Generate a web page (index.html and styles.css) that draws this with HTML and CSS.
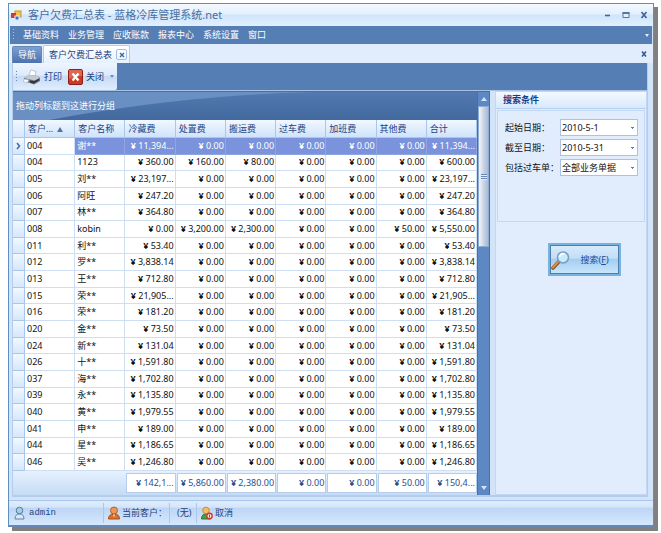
FILE: index.html
```html
<!DOCTYPE html>
<html lang="zh-CN">
<head>
    <meta charset="UTF-8">
    <meta name="viewport" content="width=device-width, initial-scale=1.0">
    <title>客户欠费汇总表 - 蓝格冷库管理系统.net</title>
    <link rel="stylesheet" href="styles.css">
</head>
<body>
    <div class="window">
        <!-- Title Bar -->
        <header class="title-bar">
            <svg width="11" height="11" viewBox="0 0 11 11">
                <rect x="4" y="1" width="6" height="6" fill="#f6c445" stroke="#c8962a"/>
                <rect x="0" y="3" width="5" height="5" fill="#c8402c"/>
                <rect x="4" y="6" width="4" height="4" fill="#3f6fc4" stroke="#e8f0fc"/>
            </svg>
            <h1>客户欠费汇总表 - 蓝格冷库管理系统.net</h1>
            <div class="window-buttons">
                <button aria-label="最小化"><svg width="8" height="8" viewBox="0 0 8 8"><path d="M1 4.5h5" stroke="#3f6396" stroke-width="1.6"/></svg></button>
                <button aria-label="最大化"><svg width="8" height="8" viewBox="0 0 8 8"><path d="M1 1.5h6v5H1z" fill="#e4effc" stroke="#5577a6"/><path d="M.5 2h7" stroke="#5577a6" stroke-width="2"/></svg></button>
                <button aria-label="关闭窗口"><svg width="8" height="8" viewBox="0 0 8 8"><path d="M1.5 1l5 6M6.5 1l-5 6" stroke="#3f6396" stroke-width="1.7"/></svg></button>
            </div>
        </header>

        <!-- Menu -->
        <nav class="menu">
            <span class="grip"></span>
            <a href="#">基础资料</a>
            <a href="#">业务管理</a>
            <a href="#">应收账款</a>
            <a href="#">报表中心</a>
            <a href="#">系统设置</a>
            <a href="#">窗口</a>
            <span class="arrow light"></span>
        </nav>

        <!-- Tabs -->
        <div class="tabs">
            <button class="tab">导航</button>
            <div class="tab active">
                <span>客户欠费汇总表</span>
                <button class="tab-close" aria-label="关闭标签"><svg width="6" height="6" viewBox="0 0 6 6"><path d="M1 1l4 4M5 1l-4 4" stroke="#3d62a0" stroke-width="1.3"/></svg></button>
            </div>
            <button class="close-all" aria-label="关闭页面"><svg width="6" height="6" viewBox="0 0 6 6"><path d="M1 .5l4 5M5 .5l-4 5" stroke="#33588f" stroke-width="1.5"/></svg></button>
        </div>

        <div class="page">
            <!-- Toolbar -->
            <div class="toolbar">
                <div class="tools">
                    <span class="grip dark"></span>
                    <button>
                        <svg width="18" height="16" viewBox="0 0 18 16">
                            <path d="M8 1l5 1.500-1.500 6-6-1z" fill="#fff" stroke="#9aa6b4" stroke-width=".6"/>
                            <path d="M1 9l5-3 9 1 2 2v3l-6 3.500L1 12z" fill="#6b747e"/>
                            <path d="M1 9l5-3 9 1 1.500 2-5 2.500z" fill="#c3cad2"/>
                            <path d="M1 10l5 .8-2 3.200-4-1.500z" fill="#f4f7fa" stroke="#9aa6b4" stroke-width=".5"/>
                            <path d="M7 11.500l4 .8 5-2.500v1.500l-5 3.200-4-1z" fill="#2d343c"/>
                        </svg>
                        打印
                    </button>
                    <button>
                        <svg width="15" height="16" viewBox="0 0 15 16">
                            <rect x=".5" y=".5" width="14" height="15" rx="1.500" fill="#c93a26" stroke="#8f2014"/>
                            <path d="M1 1h13v6Q7 7 1 10z" fill="#e0664f"/>
                            <path d="M4.500 4.500l6 7M10.500 4.500l-6 7" stroke="#fff" stroke-width="2.400"/>
                        </svg>
                        关闭
                    </button>
                    <span class="arrow"></span>
                </div>
            </div>

            <div class="content">
                <!-- Grid -->
                <main class="grid">
                    <div class="grid-body">
                        <div class="group-panel">
                            <svg viewBox="0 0 464 28" preserveAspectRatio="none"><path d="M0 0H300C180 3 90 18 36 28H0z" fill="#6a8fc2"/></svg>
                            <span>拖动列标题到这进行分组</span>
                        </div>
                        <table>
                            <thead>
                                <tr>
                                    <th class="mark"></th>
                                    <th>客户... <i class="sort"></i></th>
                                    <th>客户名称</th>
                                    <th>冷藏费</th>
                                    <th>处置费</th>
                                    <th>搬运费</th>
                                    <th>过车费</th>
                                    <th>加班费</th>
                                    <th>其他费</th>
                                    <th>合计</th>
                                </tr>
                            </thead>
                            <tbody id="rows"></tbody>
                        </table>
                        <table class="summary">
                            <tbody>
                                <tr id="totals"></tr>
                            </tbody>
                        </table>
                    </div>
                    <div class="scrollbar">
                        <div class="scroll-up"></div>
                        <div class="thumb"><span></span></div>
                        <div class="scroll-down"></div>
                    </div>
                </main>

                <!-- Search Panel -->
                <aside class="search">
                    <h2>搜索条件</h2>
                    <form class="fields">
                        <label for="start">起始日期：</label>
                        <select id="start"><option>2010-5-1</option></select>
                        <label for="end">截至日期：</label>
                        <select id="end"><option>2010-5-31</option></select>
                        <label for="bill">包括过车单：</label>
                        <select id="bill"><option>全部业务单据</option></select>
                    </form>
                    <button class="search-button">
                        <svg width="20" height="20" viewBox="0 0 20 20">
                            <path d="M2 18l6-6.500" stroke="#8d5a2c" stroke-width="3.600" stroke-linecap="round"/>
                            <path d="M2 17.500l5-5.500" stroke="#e8964a" stroke-width="1.800" stroke-linecap="round"/>
                            <circle cx="12" cy="7.500" r="5.500" fill="#c9ecfd" stroke="#7b9cc0" stroke-width="1.500"/>
                            <path d="M8.500 7a3.500 3.500 0 0 1 5-3" fill="none" stroke="#fff" stroke-width="1.800"/>
                        </svg>
                        <span>搜索(<u>F</u>)</span>
                    </button>
                </aside>
            </div>
        </div>

        <!-- Status Bar -->
        <footer class="status">
            <div class="status-item user">
                <svg width="11" height="14" viewBox="0 0 11 14">
                    <path d="M1 13q0-5 4.500-5t4.500 5z" fill="#dbe9f6" stroke="#5d83ad"/>
                    <circle cx="5.500" cy="4.500" r="3.300" fill="#a9cbe4" stroke="#4f7da9"/>
                </svg>
                <span>admin</span>
            </div>
            <div class="status-item customer">
                <svg width="12" height="14" viewBox="0 0 12 14">
                    <path d="M.5 13q0-5 5.500-5t5.500 5z" fill="#d9702a" stroke="#a9501a"/>
                    <circle cx="6" cy="4.500" r="3.500" fill="#e9985a" stroke="#b5622a"/>
                    <path d="M5 8.500h2l-1 3z" fill="#fbe3c8"/>
                </svg>
                <span>当前客户：</span>
            </div>
            <div class="status-item value">(无)</div>
            <button class="status-item">
                <svg width="12" height="14" viewBox="0 0 12 14">
                    <path d="M.5 13q0-5 4.500-5t4.500 5z" fill="#43a047" stroke="#2d7a35"/>
                    <circle cx="5" cy="4.500" r="3.300" fill="#f3bd62" stroke="#c88b36"/>
                    <circle cx="8.500" cy="10" r="2.700" fill="#fbe5e2" stroke="#d23a2c" stroke-width="1.400"/>
                    <path d="M8.500 8.500v3" stroke="#d23a2c"/>
                </svg>
                <span>取消</span>
            </button>
        </footer>
    </div>

    <script>
        // code, name, cold storage, handling, carrying, passing, overtime, other, total
        const customers = [
            ["004", "谢**", "11,394...", "0.00", "0.00", "0.00", "0.00", "0.00", "11,394..."],
            ["004", "1123", "360.00", "160.00", "80.00", "0.00", "0.00", "0.00", "600.00"],
            ["005", "刘**", "23,197...", "0.00", "0.00", "0.00", "0.00", "0.00", "23,197..."],
            ["006", "阿旺", "247.20", "0.00", "0.00", "0.00", "0.00", "0.00", "247.20"],
            ["007", "林**", "364.80", "0.00", "0.00", "0.00", "0.00", "0.00", "364.80"],
            ["008", "kobin", "0.00", "3,200.00", "2,300.00", "0.00", "0.00", "50.00", "5,550.00"],
            ["011", "利**", "53.40", "0.00", "0.00", "0.00", "0.00", "0.00", "53.40"],
            ["012", "罗**", "3,838.14", "0.00", "0.00", "0.00", "0.00", "0.00", "3,838.14"],
            ["013", "王**", "712.80", "0.00", "0.00", "0.00", "0.00", "0.00", "712.80"],
            ["015", "荣**", "21,905...", "0.00", "0.00", "0.00", "0.00", "0.00", "21,905..."],
            ["016", "荣**", "181.20", "0.00", "0.00", "0.00", "0.00", "0.00", "181.20"],
            ["020", "金**", "73.50", "0.00", "0.00", "0.00", "0.00", "0.00", "73.50"],
            ["024", "新**", "131.04", "0.00", "0.00", "0.00", "0.00", "0.00", "131.04"],
            ["026", "十**", "1,591.80", "0.00", "0.00", "0.00", "0.00", "0.00", "1,591.80"],
            ["037", "海**", "1,702.80", "0.00", "0.00", "0.00", "0.00", "0.00", "1,702.80"],
            ["039", "永**", "1,135.80", "0.00", "0.00", "0.00", "0.00", "0.00", "1,135.80"],
            ["040", "黄**", "1,979.55", "0.00", "0.00", "0.00", "0.00", "0.00", "1,979.55"],
            ["041", "申**", "189.00", "0.00", "0.00", "0.00", "0.00", "0.00", "189.00"],
            ["044", "星**", "1,186.65", "0.00", "0.00", "0.00", "0.00", "0.00", "1,186.65"],
            ["046", "吴**", "1,246.80", "0.00", "0.00", "0.00", "0.00", "0.00", "1,246.80"]
        ];
        const totals = ["142,1...", "5,860.00", "2,380.00", "0.00", "0.00", "50.00", "150,4..."];

        function money(value) {
            return `<b>¥</b> ${value}`;
        }

        // First row is the focused one
        document.getElementById('rows').innerHTML = customers.map((row, index) => `
            <tr${index === 0 ? ' class="selected"' : ''}>
                <td class="mark">${index === 0 ? '<svg width="5" height="8" viewBox="0 0 5 8"><path d="M1 1l2.500 3L1 7" fill="none" stroke="#44699f" stroke-width="1.500"/></svg>' : ''}</td>
                <td class="code">${row[0]}</td>
                <td>${row[1]}</td>
                ${row.slice(2).map(value => `<td class="money">${money(value)}</td>`).join('')}
            </tr>
        `).join('');

        document.getElementById('totals').innerHTML =
            '<td class="mark"></td><td></td><td></td>' +
            totals.map(value => `<td class="money"><div>${money(value)}</div></td>`).join('');
    </script>
</body>
</html>
```

FILE: styles.css
```css
* {
    box-sizing: border-box;
}

body {
    margin: 0;
    padding: 3px 7px 6px 8px;
    min-height: 100vh;
    display: flex;
    background: #fff;
    color: #111;
    font-family: 'Noto Sans', 'Noto Sans CJK SC', sans-serif;
    font-size: 9px;
    line-height: 12px;
}

button {
    margin: 0;
    padding: 0;
    border: none;
    background: none;
    color: inherit;
    font: inherit;
    cursor: pointer;
}

svg {
    display: block;
    flex: none;
}

.window {
    flex: 1;
    min-width: 0;
    display: flex;
    flex-direction: column;
    border: 1px solid #5f8fc0;
    border-bottom: 2px solid #6488b8;
    background: #d3e4f9;
    box-shadow: 4px 4px 0 #808080;
}

/* Title Bar */
.title-bar {
    display: flex;
    align-items: center;
    height: 22px;
    padding: 0 5px 0 2px;
    gap: 6px;
    background: linear-gradient(#f3f9ff 0%, #e3f0fe 45%, #cfe4fb 50%, #e2f0ff 100%);
}

.title-bar h1 {
    flex: 1;
    margin: 0;
    color: #476f9f;
    font-size: 11px;
    font-weight: normal;
    line-height: 16px;
}

.window-buttons {
    display: flex;
    gap: 10px;
}

/* Menu */
.menu {
    display: flex;
    align-items: center;
    gap: 9px;
    height: 18px;
    margin: 0 1px;
    padding: 0 3px;
    background: #557eb5;
}

.menu a {
    color: #fff;
    text-decoration: none;
}

.grip {
    width: 1px;
    height: 12px;
    background: repeating-linear-gradient(#a9c3e6 0 1px, transparent 1px 3px);
}

.grip.dark {
    background: repeating-linear-gradient(#6488b8 0 1px, transparent 1px 3px);
}

.arrow {
    border: 2px solid transparent;
    border-top: 3px solid #6e8fbd;
    border-bottom: none;
}

.arrow.light {
    margin-left: auto;
    border-top-color: #e4effc;
}

/* Tabs */
.tabs {
    display: flex;
    align-items: flex-end;
    gap: 1px;
    height: 19px;
    padding: 0 6px 0 3px;
    background: #e1edfd;
}

.tab {
    height: 17px;
    padding: 0 5px;
    border: 1px solid #6488b8;
    border-bottom: none;
    border-radius: 2px 2px 0 0;
    background: linear-gradient(#7f9fd0, #4a72ae);
    color: #fff;
}

.tab.active {
    display: flex;
    align-items: center;
    gap: 4px;
    height: 18px;
    padding: 0 2px 0 5px;
    border-color: #b5cdec;
    background: linear-gradient(#fff, #e6f1fe);
    color: #1b3f7e;
}

.tab-close {
    display: grid;
    place-items: center;
    width: 11px;
    height: 11px;
    border: 1px solid #a3bce0;
    border-radius: 2px;
}

.close-all {
    margin-left: auto;
    align-self: center;
}

/* Page */
.page {
    flex: 1;
    display: flex;
    flex-direction: column;
    margin: 0 5px 3px 3px;
    border: 1px solid #b5cdec;
    border-bottom: 2px solid #b5cdec;
    border-top: none;
}

.toolbar {
    height: 28px;
    border-bottom: 1px solid #a9c3e6;
    background: #557eb5;
}

.tools {
    display: inline-flex;
    align-items: center;
    gap: 6px;
    height: 27px;
    padding: 0 3px;
    border-radius: 0 0 2px 0;
    background: linear-gradient(#eef5fe 0%, #dceafc 45%, #c6dbf6 50%, #e0edfd 100%);
    color: #1b3f7e;
}

.tools button {
    display: flex;
    align-items: center;
    gap: 3px;
}

.content {
    flex: 1;
    display: flex;
    gap: 5px;
}

/* Grid */
.grid {
    flex: 1;
    min-width: 0;
    display: flex;
    border-top: 1px solid #4a6fa5;
    border-right: 1px solid #4a6fa5;
}

.grid-body {
    flex: 1;
    min-width: 0;
    display: flex;
    flex-direction: column;
}

.group-panel {
    position: relative;
    display: flex;
    align-items: center;
    height: 28px;
    padding: 0 3px;
    background: linear-gradient(#5379b0, #426a9f);
    color: #fff;
}

.group-panel svg {
    position: absolute;
    inset: 0;
    width: 100%;
    height: 100%;
}

.group-panel span {
    position: relative;
}

table {
    flex: 1;
    width: 100%;
    table-layout: fixed;
    border-collapse: separate;
    border-spacing: 0;
    background: #fff;
}

th,
td {
    padding: 0 1px 0 2px;
    border-right: 1px solid #cfdff3;
    border-bottom: 1px solid #cfdff3;
    text-align: left;
    white-space: nowrap;
    overflow: hidden;
}

th {
    height: 18px;
    padding-left: 3px;
    border-color: #a9c7ec;
    background: linear-gradient(#f2f8ff, #cfe3fb);
    color: #1f4480;
    font-weight: normal;
}

th.mark,
td.mark {
    width: 12px;
    padding: 0 3px;
    border-color: #a9c7ec;
    background: linear-gradient(#f2f8ff, #d6e7fb);
}

.sort {
    display: inline-block;
    margin-left: 1px;
    border: 3px solid transparent;
    border-top: none;
    border-bottom: 5px solid #55749f;
}

.money {
    text-align: right;
}

.selected td:not(.mark):not(.code) {
    border-color: #8ea5e2;
    background: #7a93dc;
    color: #fff;
}

/* Summary Row */
.summary {
    flex: none;
    height: 24px;
    background: linear-gradient(#e6f1fe, #c5dbf6);
    color: #2a4f8f;
}

.summary td,
.summary td.mark {
    height: 24px;
    padding: 0 0 0 1px;
    border: none;
    background: none;
}

.summary div {
    height: 20px;
    padding: 0 1px;
    border: 1px solid #b5cdec;
    background: #fff;
    line-height: 18px;
}

/* Scrollbar */
.scrollbar {
    display: flex;
    flex-direction: column;
    width: 12px;
    border-left: 1px solid #4a6fa5;
    background: #5e88c4;
}

.scroll-up,
.scroll-down {
    display: grid;
    place-items: center;
    height: 14px;
    background: #5e88c4;
}

.scroll-up::before {
    content: "";
    border: 3px solid transparent;
    border-top: none;
    border-bottom: 4px solid #cfe3fb;
}

.scroll-down {
    margin-top: auto;
}

.scroll-down::before {
    content: "";
    border: 3px solid transparent;
    border-bottom: none;
    border-top: 4px solid #cfe3fb;
}

.thumb {
    display: grid;
    place-items: center;
    height: 35%;
    border: 1px solid #8eabd3;
    background: linear-gradient(90deg, #f1f5fb, #c3cfe0 60%, #a9bbd4);
}

.thumb span {
    width: 6px;
    height: 6px;
    background: repeating-linear-gradient(#6488b8 0 1px, #e1edfd 1px 2px);
}

/* Search Panel */
.search {
    display: flex;
    flex-direction: column;
    width: 152px;
    border: 1px solid #c1d7f3;
    background: #e1edfd;
}

.search h2 {
    margin: 0;
    padding: 0 7px;
    border-bottom: 1px solid #b5d0f2;
    background: linear-gradient(#f4f9ff, #d8e8fc);
    color: #153f8a;
    font-size: 9px;
    line-height: 16px;
}

.fields {
    display: grid;
    grid-template-columns: 52px 78px;
    grid-auto-rows: 17px;
    gap: 3px;
    height: 112px;
    margin: 1px 1px 0;
    padding: 8px 7px;
    border: 1px solid #c1d7f3;
    align-items: center;
    white-space: nowrap;
}

.fields select {
    width: 100%;
    height: 17px;
    padding: 0 1px;
    appearance: none;
    border: 1px solid #a9c3e6;
    border-radius: 0;
    background:
        linear-gradient(#5f7fb0, #5f7fb0) right 3px top 7px / 3px 1px no-repeat,
        linear-gradient(#5f7fb0, #5f7fb0) right 4px top 8px / 1px 1px no-repeat,
        #fff;
    color: #111;
    font: inherit;
}

.search-button {
    display: flex;
    align-items: center;
    align-self: center;
    gap: 10px;
    width: 73px;
    height: 33px;
    margin: 21px 0 0 26px;
    padding: 0 1px;
    border: 2px solid #78b2e0;
    outline: 1px solid #4e7eaa;
    outline-offset: -3px;
    background: linear-gradient(#d8ebfb 0%, #c2def7 45%, #a5cdf1 50%, #c9e8fb 100%);
    color: #1d4d94;
}

/* Status Bar */
.status {
    display: flex;
    align-items: center;
    height: 25px;
    border-top: 1px solid #a9c7ec;
    background: linear-gradient(#dfecfc 0%, #d5e6fa 25%, #bdd6f5 30%, #d6e8fd 100%);
    color: #1f4480;
}

.status-item {
    display: flex;
    align-items: center;
    gap: 4px;
    height: 20px;
    padding: 0 4px;
    border-right: 1px solid #a9c7ec;
    white-space: nowrap;
}

.status-item:last-child {
    gap: 2px;
    border-right: none;
}

.user {
    width: 95px;
    padding-left: 5px;
    font-family: 'Liberation Mono', monospace;
}

.customer {
    width: 66px;
    gap: 2px;
}

.value {
    width: 27px;
    padding: 0 7px;
}
```
